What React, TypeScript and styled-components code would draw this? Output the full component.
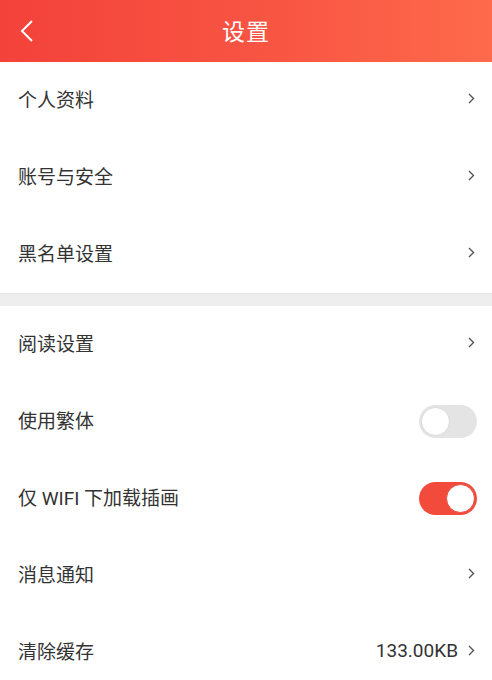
import React, { useState } from "react";
import styled, { createGlobalStyle } from "styled-components";

const Global = createGlobalStyle`
  html, body { margin: 0; padding: 0; background: #ffffff; }
  body { font-family: Roboto, "Noto Sans CJK SC", "Noto Sans", sans-serif; }
`;

const Page = styled.div`
  width: 492px;
  min-height: 680px;
  background: #ffffff;
  display: flex;
  flex-direction: column;
`;

const Header = styled.header`
  height: 62px;
  background: linear-gradient(90deg, #f3423a 0%, #f85543 55%, #fe6a4b 100%);
  display: grid;
  grid-template-columns: 62px 1fr 62px;
  align-items: center;
  color: #fff;
`;

const BackButton = styled.button`
  border: none;
  background: none;
  padding: 0 0 0 20px;
  height: 62px;
  display: flex;
  align-items: center;
  color: #fff;
  cursor: pointer;
`;

const Title = styled.h1`
  margin: 0 0 2px;
  text-align: center;
  font-size: 23px;
  font-weight: 400;
  letter-spacing: 1px;
  font-family: "Noto Sans CJK SC", sans-serif;
`;

const Section = styled.section`
  display: flex;
  flex-direction: column;
  background: #fff;
`;

const Divider = styled.div`
  height: 12px;
  background: #eeeeee;
  border-top: 1px solid #e6e6e6;
`;

const Row = styled.div`
  height: 77px;
  box-sizing: border-box;
  display: flex;
  align-items: center;
  padding: 0 17px 4px 18px;
  gap: 10px;
`;

const Label = styled.span`
  flex: 1;
  font-size: 19px;
  color: #333333;
  font-family: Roboto, "Noto Sans CJK SC", sans-serif;
`;

const Value = styled.span`
  font-size: 19px;
  color: #333333;
  font-family: Roboto, "Noto Sans CJK SC", sans-serif;
`;

const Switch = styled.button<{ $on: boolean }>`
  width: 58px;
  height: 33px;
  border-radius: 17px;
  border: none;
  padding: 0;
  margin: 4px -2px 0 0;
  position: relative;
  background: ${(p) => (p.$on ? "#f24b3c" : "#e4e4e4")};
  cursor: pointer;
  &::after {
    content: "";
    position: absolute;
    top: 2px;
    left: ${(p) => (p.$on ? "27px" : "2px")};
    width: 29px;
    height: 29px;
    border-radius: 50%;
    background: #fff;
    box-sizing: border-box;
    border: 1px solid ${(p) => (p.$on ? "#e9473a" : "#dadada")};
  }
`;

const Chevron = () => (
  <svg width="7" height="11" viewBox="0 0 7 11" fill="none">
    <path d="M1 1 L5.5 5.5 L1 10" stroke="#555" strokeWidth="1.4" />
  </svg>
);

const BackIcon = () => (
  <svg width="14" height="24" viewBox="0 0 14 24" fill="none">
    <path d="M12 2 L2 12 L12 22" stroke="#fff" strokeWidth="2" />
  </svg>
);

export default function App() {
  const [trad, setTrad] = useState(false);
  const [wifi, setWifi] = useState(true);
  return (
    <Page>
      <Global />
      <Header>
        <BackButton aria-label="back">
          <BackIcon />
        </BackButton>
        <Title>设置</Title>
        <span />
      </Header>
      <Section>
        <Row>
          <Label>个人资料</Label>
          <Chevron />
        </Row>
        <Row>
          <Label>账号与安全</Label>
          <Chevron />
        </Row>
        <Row>
          <Label>黑名单设置</Label>
          <Chevron />
        </Row>
      </Section>
      <Divider />
      <Section>
        <Row>
          <Label>阅读设置</Label>
          <Chevron />
        </Row>
        <Row>
          <Label>使用繁体</Label>
          <Switch $on={trad} onClick={() => setTrad(!trad)} />
        </Row>
        <Row>
          <Label>仅 WIFI 下加载插画</Label>
          <Switch $on={wifi} onClick={() => setWifi(!wifi)} />
        </Row>
        <Row>
          <Label>消息通知</Label>
          <Chevron />
        </Row>
        <Row>
          <Label>清除缓存</Label>
          <Value>133.00KB</Value>
          <Chevron />
        </Row>
      </Section>
    </Page>
  );
}
